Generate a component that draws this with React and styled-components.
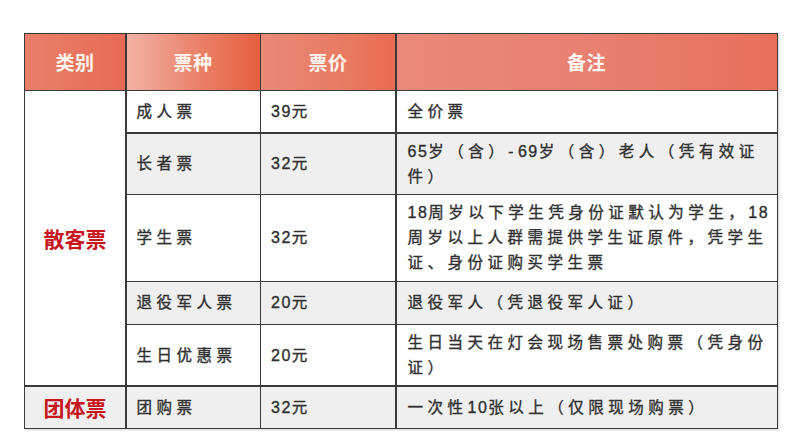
import React from "react";
import styled, { createGlobalStyle } from "styled-components";

const Global = createGlobalStyle`
  html, body { margin: 0; padding: 0; background: #fff; }
  body { font-family: "Liberation Sans", "Noto Sans CJK SC", sans-serif; }
`;

const Page = styled.div`
  width: 800px;
  height: 434px;
  box-sizing: border-box;
  padding: 33px 0 0 24px;
  background: #fff;
`;

const Table = styled.div`
  display: grid;
  width: max-content;
  grid-template-columns: 100px 133px 134px 380px;
  grid-template-rows: 55.5px 41px 60px 85.5px 41.5px 60px 41.5px;
  gap: 1.5px;
  border: 1.5px solid #3a3a3a;
  background: #3a3a3a;
  box-shadow: 1px 1px 2px rgba(0, 0, 0, 0.18);
`;

const Head = styled.div`
  display: flex;
  align-items: center;
  justify-content: center;
  background: ${(p) => p.$bg};
  color: #fff6f0;
  font-family: "Noto Sans CJK SC", sans-serif;
  font-weight: 700;
  font-size: 19px;
  letter-spacing: 0.5px;
`;

const Category = styled.div`
  grid-column: 1;
  grid-row: ${(p) => p.$rows};
  display: flex;
  align-items: center;
  justify-content: center;
  background: ${(p) => (p.$grey ? "#efefef" : "#fff")};
  color: #c8161d;
  font-family: "Noto Sans CJK SC", sans-serif;
  font-weight: 700;
  font-size: 21px;
`;

const Cell = styled.div`
  display: flex;
  align-items: center;
  box-sizing: border-box;
  padding: ${(p) => (p.$wide ? "0 8px 0 11px" : "0 8px 0 10px")};
  background: ${(p) => (p.$grey ? "#efefef" : "#fff")};
  color: #2f2f2f;
  font-family: "Liberation Sans", "Noto Sans CJK SC", sans-serif;
  font-weight: 400;
  -webkit-text-stroke: 0.35px #2f2f2f;
  font-size: 15.5px;
  line-height: 25px;
  letter-spacing: 4.5px;
  white-space: nowrap;
`;

const Num = styled.span`
  letter-spacing: 1.5px;
  font-size: 16px;
`;

const heads = [
  { t: "类别", bg: "linear-gradient(90deg, #ea806a, #e66b54)" },
  { t: "票种", bg: "linear-gradient(90deg, #f2b2a4, #ea8068 55%, #e5603f)" },
  { t: "票价", bg: "linear-gradient(90deg, #e88a78, #e9785f 70%, #ea6c54)" },
  { t: "备注", bg: "linear-gradient(90deg, #e88a7a, #e88070 50%, #e8705b)" },
];

const rows = [
  { type: "成人票", price: "39", note: <>全价票</>, grey: false },
  {
    type: "长者票",
    price: "32",
    note: (
      <>
        <Num>65</Num>岁（含）-<Num>69</Num>岁（含）老人（凭有效证
        <br />件）
      </>
    ),
    grey: true,
  },
  {
    type: "学生票",
    price: "32",
    note: (
      <>
        <Num>18</Num>周岁以下学生凭身份证默认为学生，<Num>18</Num>
        <br />周岁以上人群需提供学生证原件，凭学生
        <br />证、身份证购买学生票
      </>
    ),
    grey: false,
  },
  { type: "退役军人票", price: "20", note: <>退役军人（凭退役军人证）</>, grey: true },
  {
    type: "生日优惠票",
    price: "20",
    note: (
      <>
        生日当天在灯会现场售票处购票（凭身份
        <br />证）
      </>
    ),
    grey: false,
  },
  {
    type: "团购票",
    price: "32",
    note: (
      <>
        一次性<Num>10</Num>张以上（仅限现场购票）
      </>
    ),
    grey: true,
  },
];

export default function App() {
  return (
    <>
      <Global />
      <Page>
        <Table>
          {heads.map((h) => (
            <Head key={h.t} $bg={h.bg}>
              {h.t}
            </Head>
          ))}
          <Category $rows="2 / 7">散客票</Category>
          <Category $rows="7 / 8" $grey>
            团体票
          </Category>
          {rows.map((r) => (
            <React.Fragment key={r.type}>
              <Cell $grey={r.grey}>{r.type}</Cell>
              <Cell $grey={r.grey}>
                <Num>{r.price}</Num>元
              </Cell>
              <Cell $grey={r.grey} $wide>
                <div>{r.note}</div>
              </Cell>
            </React.Fragment>
          ))}
        </Table>
      </Page>
    </>
  );
}
